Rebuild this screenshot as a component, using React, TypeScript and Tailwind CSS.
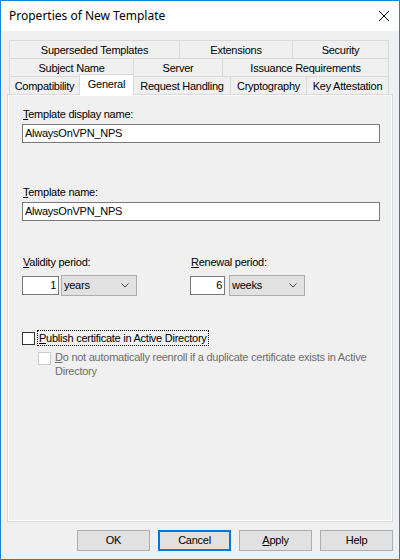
import React from "react";

type Tab = { label: string; w: string; last?: boolean };

const ROW1: Tab[] = [
  { label: "Superseded Templates", w: "w-[170px]" },
  { label: "Extensions", w: "w-[113px]" },
  { label: "Security", w: "w-[97px]", last: true },
];

const ROW2: Tab[] = [
  { label: "Subject Name", w: "w-[124px]" },
  { label: "Server", w: "w-[89px]" },
  { label: "Issuance Requirements", w: "w-[167px]", last: true },
];

function TabRow({ tabs }: { tabs: Tab[] }) {
  return (
    <div className="flex h-[18px]">
      {tabs.map((t) => (
        <div
          key={t.label}
          className={`${t.w} flex justify-center pt-[3px] border-t border-l border-[#d9d9d9] ${
            t.last ? "border-r" : ""
          }`}
        >
          <span className="leading-[13px]">{t.label}</span>
        </div>
      ))}
    </div>
  );
}

function Chevron() {
  return (
    <svg width="8" height="5" viewBox="0 0 8 5" className="shrink-0">
      <path d="M0.5 0.5 L4 4 L7.5 0.5" stroke="#404040" strokeWidth="1" fill="none" />
    </svg>
  );
}

function NumberBox({ value, w }: { value: string; w: string }) {
  return (
    <div className={`${w} h-[19px] border border-[#7a7a7a] bg-white flex items-center justify-end pr-[2px]`}>
      <span className="leading-[13px]">{value}</span>
    </div>
  );
}

function Dropdown({ value }: { value: string }) {
  return (
    <div className="w-[76px] h-[21px] border border-[#adadad] bg-[#e1e1e1] flex items-center justify-between pl-[2px] pr-[7px]">
      <span className="leading-[13px]">{value}</span>
      <Chevron />
    </div>
  );
}

function Button({ children, primary }: { children: React.ReactNode; primary?: boolean }) {
  return (
    <div
      className={`w-[73px] h-[21px] flex items-center justify-center bg-[#e1e1e1] ${
        primary ? "border-2 border-[#0078d7]" : "border border-[#adadad]"
      }`}
    >
      <span className="leading-[13px]">{children}</span>
    </div>
  );
}

export default function App() {
  return (
    <div className="w-[400px] h-[560px] flex flex-col border border-[#1883d7] bg-[#f0f0f0] text-black text-[11px] tracking-[-0.25px] font-['Liberation_Sans',Arial,sans-serif]">
      {/* Title bar */}
      <div className="h-[30px] shrink-0 bg-white flex items-center justify-between pl-[8px] pr-[10px]">
        <span className="text-[12px] tracking-normal font-['Noto_Sans',sans-serif] leading-[16px]">
          Properties of New Template
        </span>
        <svg width="10" height="10" viewBox="0 0 10 10">
          <path d="M0 0 L10 10 M10 0 L0 10" stroke="#000" strokeWidth="1" />
        </svg>
      </div>

      <div className="flex flex-col px-[6px] pt-[9px]">
        {/* Tab strip */}
        <div className="ml-[2px] w-[380px]">
          <TabRow tabs={ROW1} />
          <TabRow tabs={ROW2} />
          <div className="flex h-[18px]">
            <div className="w-[70px] flex justify-center pt-[3px] border-t border-l border-[#d9d9d9]">
              <span className="leading-[13px]">Compatibility</span>
            </div>
            <div className="relative z-10 -mt-[2px] w-[55px] h-[21px] flex justify-center pt-[3px] bg-white border-t border-l border-r border-[#d9d9d9]">
              <span className="leading-[13px]">General</span>
            </div>
            <div className="w-[96px] flex justify-center pt-[3px] border-t border-[#d9d9d9]">
              <span className="leading-[13px]">Request Handling</span>
            </div>
            <div className="w-[76px] flex justify-center pt-[3px] border-t border-l border-[#d9d9d9]">
              <span className="leading-[13px]">Cryptography</span>
            </div>
            <div className="w-[83px] flex justify-center pt-[3px] border-t border-l border-r border-[#d9d9d9]">
              <span className="leading-[13px]">Key Attestation</span>
            </div>
          </div>
        </div>

        {/* General page */}
        <div className="h-[428px] border border-[#d9d9d9] shadow-[inset_0_0_0_1px_#ffffff] pl-[14px] pt-[13px] flex flex-col">
          <div className="ml-[1px] leading-[13px]">
            <span className="underline">T</span>emplate display name:
          </div>
          <div className="mt-[3px] w-[358px] h-[19px] border border-[#7a7a7a] bg-white flex items-center pl-[2px]">
            <span className="leading-[13px]">AlwaysOnVPN_NPS</span>
          </div>

          <div className="mt-[43px] ml-[1px] leading-[13px]">
            <span className="underline">T</span>emplate name:
          </div>
          <div className="mt-[3px] w-[358px] h-[19px] border border-[#7a7a7a] bg-white flex items-center pl-[2px]">
            <span className="leading-[13px]">AlwaysOnVPN_NPS</span>
          </div>

          <div className="mt-[35px] flex">
            <div className="w-[168px] flex flex-col">
              <div className="ml-[1px] leading-[13px]">
                <span className="underline">V</span>alidity period:
              </div>
              <div className="mt-[6px] h-[21px] flex items-center gap-[2px]">
                <NumberBox value="1" w="w-[37px]" />
                <Dropdown value="years" />
              </div>
            </div>
            <div className="flex flex-col">
              <div className="ml-[1px] leading-[13px]">
                <span className="underline">R</span>enewal period:
              </div>
              <div className="mt-[6px] h-[21px] flex items-center gap-[4px]">
                <NumberBox value="6" w="w-[35px]" />
                <Dropdown value="weeks" />
              </div>
            </div>
          </div>

          {/* Active Directory options */}
          <div className="mt-[34px] flex items-center">
            <div className="w-[13px] h-[13px] border border-[#333333] bg-white shrink-0" />
            <div className="ml-[2px] px-[1px] h-[16px] flex items-center border border-dotted border-black">
              <span className="leading-[13px]">
                <span className="underline">P</span>ublish certificate in Active Directory
              </span>
            </div>
          </div>
          <div className="mt-[6px] ml-[16px] flex items-start">
            <div className="w-[13px] h-[13px] border border-[#cccccc] bg-white shrink-0" />
            <div className="ml-[4px] -mt-[2px] flex flex-col leading-[14px] text-[#6d6d6d]">
              <span>
                <span className="underline">D</span>o not automatically reenroll if a duplicate certificate exists in Active
              </span>
              <span>Directory</span>
            </div>
          </div>
        </div>

        {/* Dialog buttons */}
        <div className="mt-[8px] flex justify-end gap-[8px]">
          <Button>OK</Button>
          <Button primary>Cancel</Button>
          <Button>
            <span className="underline">A</span>pply
          </Button>
          <Button>Help</Button>
        </div>
      </div>
    </div>
  );
}
